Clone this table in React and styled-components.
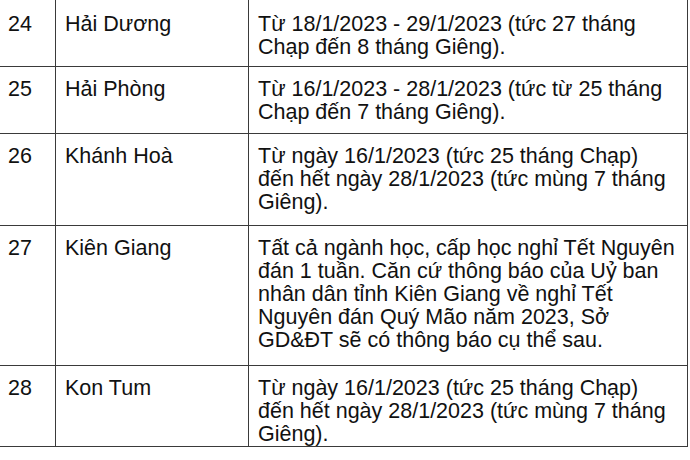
import React from 'react'
import styled, { createGlobalStyle } from 'styled-components'

const GlobalStyle = createGlobalStyle`
  html, body {
    margin: 0;
    padding: 0;
    background: #fff;
    overflow: hidden;
  }
  body {
    font-family: "Liberation Sans", Arial, sans-serif;
    color: #111;
  }
`

const Sheet = styled.div`
  width: 690px;
  height: 460px;
  overflow: hidden;
  background: #fff;
`

const Table = styled.table`
  border-collapse: collapse;
  table-layout: fixed;
  width: 690px;
  margin: -1px 0 0 -2px;
  font-size: 21.5px;
  line-height: 23px;
`

const Row = styled.tr`
  height: ${p => p.h}px;
`

const Cell = styled.td`
  border: 1px solid #3a3a3a;
  vertical-align: top;
  padding: ${p => p.pt || 11}px 4px 0 9px;
  white-space: nowrap;
  overflow: hidden;
`

const rows = [
  { no: '24', name: 'Hải Dương', h: 67, pt: 13, lines: ['Từ 18/1/2023 - 29/1/2023 (tức 27 tháng', 'Chạp đến 8 tháng Giêng).'] },
  { no: '25', name: 'Hải Phòng', h: 67, lines: ['Từ 16/1/2023 - 28/1/2023 (tức từ 25 tháng', 'Chạp đến 7 tháng Giêng).'] },
  { no: '26', name: 'Khánh Hoà', h: 92, lines: ['Từ ngày 16/1/2023 (tức 25 tháng Chạp)', 'đến hết ngày 28/1/2023 (tức mùng 7 tháng', 'Giêng).'] },
  {
    no: '27', name: 'Kiên Giang', h: 140, lines: [
      'Tất cả ngành học, cấp học nghỉ Tết Nguyên',
      'đán 1 tuần. Căn cứ thông báo của Uỷ ban',
      'nhân dân tỉnh Kiên Giang về nghỉ Tết',
      'Nguyên đán Quý Mão năm 2023, Sở',
      'GD&ĐT sẽ có thông báo cụ thể sau.',
    ]
  },
  { no: '28', name: 'Kon Tum', h: 81, lines: ['Từ ngày 16/1/2023 (tức 25 tháng Chạp)', 'đến hết ngày 28/1/2023 (tức mùng 7 tháng', 'Giêng).'] },
]

export default function App() {
  return (
    <>
      <GlobalStyle />
      <Sheet>
        <Table>
          <colgroup>
            <col style={{ width: 57 }} />
            <col style={{ width: 193 }} />
            <col />
          </colgroup>
          <tbody>
            {rows.map(r => (
              <Row key={r.no} h={r.h}>
                <Cell pt={r.pt}>{r.no}</Cell>
                <Cell pt={r.pt}>{r.name}</Cell>
                <Cell pt={r.pt}>
                  {r.lines.map((l, i) => (
                    <React.Fragment key={i}>
                      {i > 0 && <br />}
                      {l}
                    </React.Fragment>
                  ))}
                </Cell>
              </Row>
            ))}
          </tbody>
        </Table>
      </Sheet>
    </>
  )
}
